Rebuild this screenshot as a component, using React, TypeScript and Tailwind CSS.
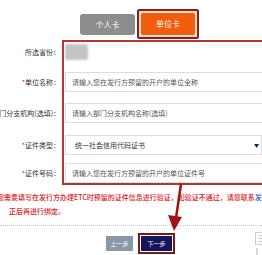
import React from "react";

const rows = [
  { label: "所选省份：", star: false, mt: "mt-[0px]", kind: "province" },
  { label: "单位名称：", star: true, mt: "mt-[10px]", kind: "input", text: "请输入您在发行方预留的开户的单位全称" },
  { label: "部门分支机构(选填)：", star: false, mt: "mt-[11px]", kind: "input", text: "请输入部门分支机构名称(选填)" },
  { label: "证件类型：", star: true, mt: "mt-[12px]", kind: "select", text: "统一社会信用代码证书" },
  { label: "证件号码：", star: true, mt: "mt-[8px]", kind: "input", text: "请输入您在发行方预留的开户的单位证件号" },
];

export default function App() {
  return (
    <div className="relative h-[255px] w-[262px] overflow-hidden bg-white font-['Noto_Sans_CJK_SC',sans-serif]">
      {/* tabs */}
      <div className="flex pl-[80px] pt-[9px]">
        <div className="mt-[5px] flex h-[21px] w-[55px] items-center justify-center rounded-[3px] bg-[#8d8d8d] text-[8px] text-white">
          个人卡
        </div>
        <div className="ml-[2px] rounded-[2px] border-2 border-[#8c1d18] bg-[#f6dcc6] p-[2px]">
          <div className="flex h-[22px] w-[54px] items-center justify-center rounded-[2px] bg-[#f25c0d] text-[8px] text-white">
            单位卡
          </div>
        </div>
      </div>

      {/* form */}
      <div className="mt-[1px] flex">
        <div className="flex w-[60px] shrink-0 flex-col pt-[2px] text-[7px] text-[#333]">
          {rows.map((r) => (
            <div key={r.label} className={`${r.mt} flex h-[20px] items-center justify-end whitespace-nowrap`}>
              {r.star && <span className="text-[#c62828]">*</span>}
              {r.label}
            </div>
          ))}
        </div>
        <div className="ml-[2px] flex w-[214px] shrink-0 flex-col border-2 border-[#b3372d] pl-[1px] text-[7px]">
          {rows.map((r) => (
            <div key={r.label} className={`${r.mt} h-[20px]`}>
              {r.kind === "province" && (
                <div className="mt-[2px] h-[16px] w-[23px] rounded-[2px] bg-[#c4c4c4] blur-[1px]" />
              )}
              {r.kind === "input" && (
                <div className="flex h-[20px] w-[200px] items-center border border-[#dcdcdc] bg-white pl-[6px] whitespace-nowrap text-[#555]">
                  {r.text}
                </div>
              )}
              {r.kind === "select" && (
                <div className="flex h-[20px] w-[197px] items-center justify-between border border-[#dcdcdc] bg-white pl-[9px] pr-[2px] whitespace-nowrap text-[#333]">
                  <span>{r.text}</span>
                  <span className="text-[5px] text-[#222]">▼</span>
                </div>
              )}
            </div>
          ))}
        </div>
      </div>

      {/* notice */}
      <div className="mt-[5px] text-[7px] font-medium leading-[14px] text-[#e0201a]">
        <div className="ml-[-3px] whitespace-nowrap">
          您需要填写在发行方办理ETC时预留的证件信息进行验证，如验证不通过，请您联系<span className="text-[#2a5bd7]">发行方</span>
        </div>
        <div className="pl-[9px] whitespace-nowrap">正后再进行绑定。</div>
      </div>

      <div className="mt-[7px] border-t border-dotted border-[#c8c8c8]" />

      {/* buttons */}
      <div className="mt-[7px] flex items-center pl-[106px]">
        <div className="flex h-[15px] w-[27px] items-center justify-center bg-[#8898a9] text-[6px] text-white">
          上一步
        </div>
        <div className="ml-[5px] border-2 border-[#7c1a1a] p-[1px]">
          <div className="flex h-[15px] w-[31px] items-center justify-center bg-[#15155c] text-[6px] text-white">
            下一步
          </div>
        </div>
      </div>

      {/* right floating widget */}
      <div className="absolute left-[255px] top-[232px] flex h-[13px] w-[10px] flex-col gap-[2px] border border-[#cfcfcf] bg-white p-[2px]">
        <div className="h-px bg-[#cfcfcf]" />
        <div className="h-px bg-[#cfcfcf]" />
        <div className="h-px bg-[#cfcfcf]" />
      </div>
      <div className="absolute left-[256px] top-[248px] h-[7px] w-[2px] bg-[#d8d8d8]" />

      {/* annotation arrow */}
      <svg className="pointer-events-none absolute left-0 top-0" width="262" height="255" viewBox="0 0 262 255">
        <line x1="181" y1="184" x2="176" y2="218" stroke="#a51212" strokeWidth="2.5" />
        <polygon points="168,215 182,217 174,231" fill="#a51212" />
      </svg>
    </div>
  );
}
